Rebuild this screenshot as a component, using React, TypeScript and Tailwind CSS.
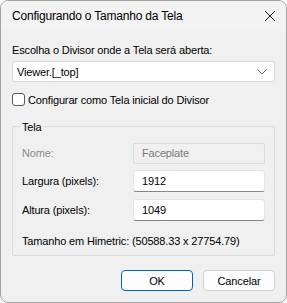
import React from "react";

const font = { fontFamily: "'Segoe UI', 'Liberation Sans', Arial, sans-serif" };

const Field: React.FC<{ label: string; value: string; disabled?: boolean }> = ({ label, value, disabled }) => (
  <div className="flex items-center h-[22px]">
    <span className={disabled ? "w-[111px] text-[#8c8c8c]" : "w-[111px] text-black"}>{label}</span>
    {disabled ? (
      <div className="w-[132px] h-[21px] border border-[#dcdcdc] bg-[#f0f0f0] rounded-[2px] flex items-center px-[8px] text-[#7a7a7a]">
        {value}
      </div>
    ) : (
      <div className="w-[132px] h-[22px] border border-[#e5e5e5] border-b-[#868686] bg-white rounded-[3px] flex items-center px-[8px]">
        {value}
      </div>
    )}
  </div>
);

export default function App() {
  return (
    <div
      className="w-[287px] h-[303px] rounded-[8px] border border-[#a3a3a3] bg-[#f0f0f0] overflow-hidden flex flex-col text-[11px] leading-[16px] tracking-[-0.15px] text-black whitespace-nowrap"
      style={font}
    >
      <div className="h-[30px] bg-[#f3f3f3] flex items-center justify-between pl-[11px] pr-[9px] text-[12px] tracking-[-0.2px]">
        <span>Configurando o Tamanho da Tela</span>
        <svg width="12" height="12" viewBox="0 0 12 12" className="mr-[1px]">
          <path d="M1 1 L11 11 M11 1 L1 11" stroke="#1a1a1a" strokeWidth="1" fill="none" />
        </svg>
      </div>

      <div className="flex flex-col px-[11px]">
        <div className="mt-[11px] h-[16px] flex items-center">Escolha o Divisor onde a Tela será aberta:</div>

        <div className="mt-[3px] h-[21px] bg-white border border-[#dadada] rounded-[3px] flex items-center justify-between pl-[4px] pr-[7px]">
          <span>Viewer.[_top]</span>
          <svg width="10" height="6" viewBox="0 0 10 6">
            <path d="M0.5 0.5 L5 5 L9.5 0.5" stroke="#6b6b6b" strokeWidth="1" fill="none" />
          </svg>
        </div>

        <div className="mt-[11px] flex items-center h-[13px]">
          <div className="w-[13px] h-[13px] border border-[#5a5a5a] rounded-[3px] bg-white" />
          <span className="ml-[3px]">Configurar como Tela inicial do Divisor</span>
        </div>

        <div className="mt-[20px] relative border border-[#dcdcdc] rounded-[2px] h-[130px] pt-[15px] px-[9px] flex flex-col">
          <span className="absolute -top-[8px] left-[7px] px-[2px] bg-[#f0f0f0] leading-[16px]">Tela</span>
          <Field label="Nome:" value="Faceplate" disabled />
          <div className="mt-[6px]">
            <Field label="Largura (pixels):" value="1912" />
          </div>
          <div className="mt-[7px]">
            <Field label="Altura (pixels):" value="1049" />
          </div>
          <div className="mt-[12px] h-[16px] flex items-center">Tamanho em Himetric: (50588.33 x 27754.79)</div>
        </div>

        <div className="mt-[14px] flex justify-end gap-[10px]">
          <button className="w-[72px] h-[21px] rounded-[4px] border border-[#0067c0] bg-[#fdfdfd] flex items-center justify-center">
            OK
          </button>
          <button className="w-[72px] h-[21px] rounded-[4px] border border-[#d0d0d0] bg-[#fdfdfd] flex items-center justify-center">
            Cancelar
          </button>
        </div>
      </div>
    </div>
  );
}
